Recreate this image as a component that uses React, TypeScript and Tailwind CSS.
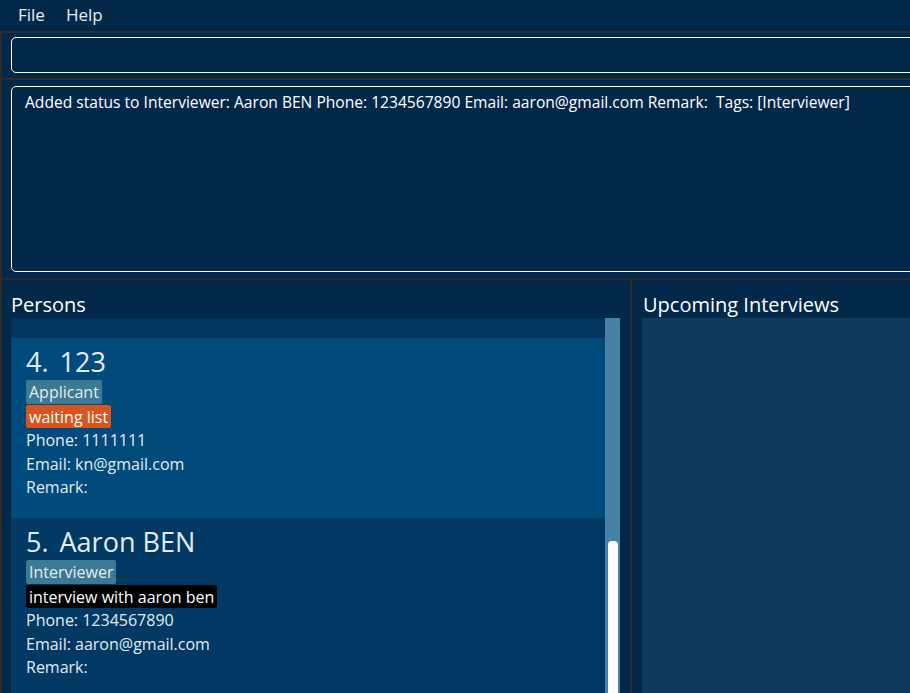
import React from "react";

type Person = {
  index: number;
  name: string;
  role: string;
  status: string;
  statusClass: string;
  phone: string;
  email: string;
  selected?: boolean;
};

const people: Person[] = [
  {
    index: 4,
    name: "123",
    role: "Applicant",
    status: "waiting list",
    statusClass: "bg-[#d9541e]",
    phone: "1111111",
    email: "kn@gmail.com",
    selected: true,
  },
  {
    index: 5,
    name: "Aaron BEN",
    role: "Interviewer",
    status: "interview with aaron ben",
    statusClass: "bg-black",
    phone: "1234567890",
    email: "aaron@gmail.com",
  },
];

function PersonCard({ p }: { p: Person }) {
  return (
    <div
      className={`h-[180px] shrink-0 pl-[15px] pt-[4px] text-[#e4ebf1] ${
        p.selected ? "bg-[#004a7c]" : "bg-[#003a64]"
      }`}
    >
      <div className="flex h-[38px] items-center gap-[11px] text-[27px] leading-none">
        <span>{p.index}.</span>
        <span>{p.name}</span>
      </div>
      <div className="flex flex-col items-start gap-[1px] text-[16px] leading-none">
        <span className="flex h-[24px] items-center rounded-[2px] bg-[#3c7a93] px-[3px]">{p.role}</span>
        <span className={`flex h-[23px] items-center rounded-[2px] px-[3px] text-white ${p.statusClass}`}>
          {p.status}
        </span>
      </div>
      <div className="mt-[1px] flex flex-col text-[16px] leading-[23.5px]">
        <span>Phone: {p.phone}</span>
        <span>Email: {p.email}</span>
        <span>Remark:</span>
      </div>
    </div>
  );
}

export default function App() {
  return (
    <div
      className="flex h-[693px] w-[910px] flex-col overflow-hidden bg-[#2e2a27] text-white"
      style={{ fontFamily: '"Open Sans", "Noto Sans", sans-serif' }}
    >
      {/* menu */}
      <div className="flex h-[31px] shrink-0 items-center gap-[21px] bg-[#012849] pb-[1px] pl-[18px] text-[17px] text-[#e8eef4]">
        <span>File</span>
        <span>Help</span>
      </div>

      <div className="mt-[2px] flex min-h-0 flex-1 flex-col pl-[2px]">
        {/* command box */}
        <div className="h-[45px] shrink-0 bg-[#012849] pl-[9px] pt-[4px]">
          <div className="h-[36px] w-[920px] rounded-[5px] border border-white bg-[#012849]" />
        </div>

        {/* result */}
        <div className="mt-[2px] h-[198px] shrink-0 bg-[#012849] pl-[9px] pt-[6px]">
          <div className="h-[186px] w-[920px] rounded-[5px] border border-white px-[13px] pt-[4px] text-[15.6px] text-white">
            Added status to Interviewer: Aaron BEN Phone: 1234567890 Email: aaron@gmail.com Remark:&nbsp; Tags:
            [Interviewer]
          </div>
        </div>

        {/* panes */}
        <div className="mt-[2px] flex min-h-0 flex-1">
          <div className="flex w-[628px] shrink-0 flex-col bg-[#012849] pl-[9px] pr-[10px]">
            <div className="flex h-[38px] shrink-0 items-center pt-[12px] text-[20px]">Persons</div>
            <div className="flex min-h-0 flex-1">
              <div className="flex min-w-0 flex-1 flex-col overflow-hidden">
                <div className="h-[20px] shrink-0 bg-[#03365f]" />
                {people.map((p) => (
                  <PersonCard key={p.index} p={p} />
                ))}
              </div>
              <div className="flex w-[15px] shrink-0 flex-col bg-[#4682a8] pl-[3px] pr-[2px] pt-[223px]">
                <div className="flex-1 rounded-t-[4px] bg-white" />
              </div>
            </div>
          </div>
          <div className="w-[2px] shrink-0 bg-[#2e2a27]" />
          <div className="flex min-w-0 flex-1 flex-col bg-[#012849] pl-[10px]">
            <div className="flex h-[38px] shrink-0 items-center pl-[1px] pt-[12px] text-[20px]">
              Upcoming Interviews
            </div>
            <div className="flex-1 bg-[#0e3a5e]" />
          </div>
        </div>
      </div>
    </div>
  );
}
